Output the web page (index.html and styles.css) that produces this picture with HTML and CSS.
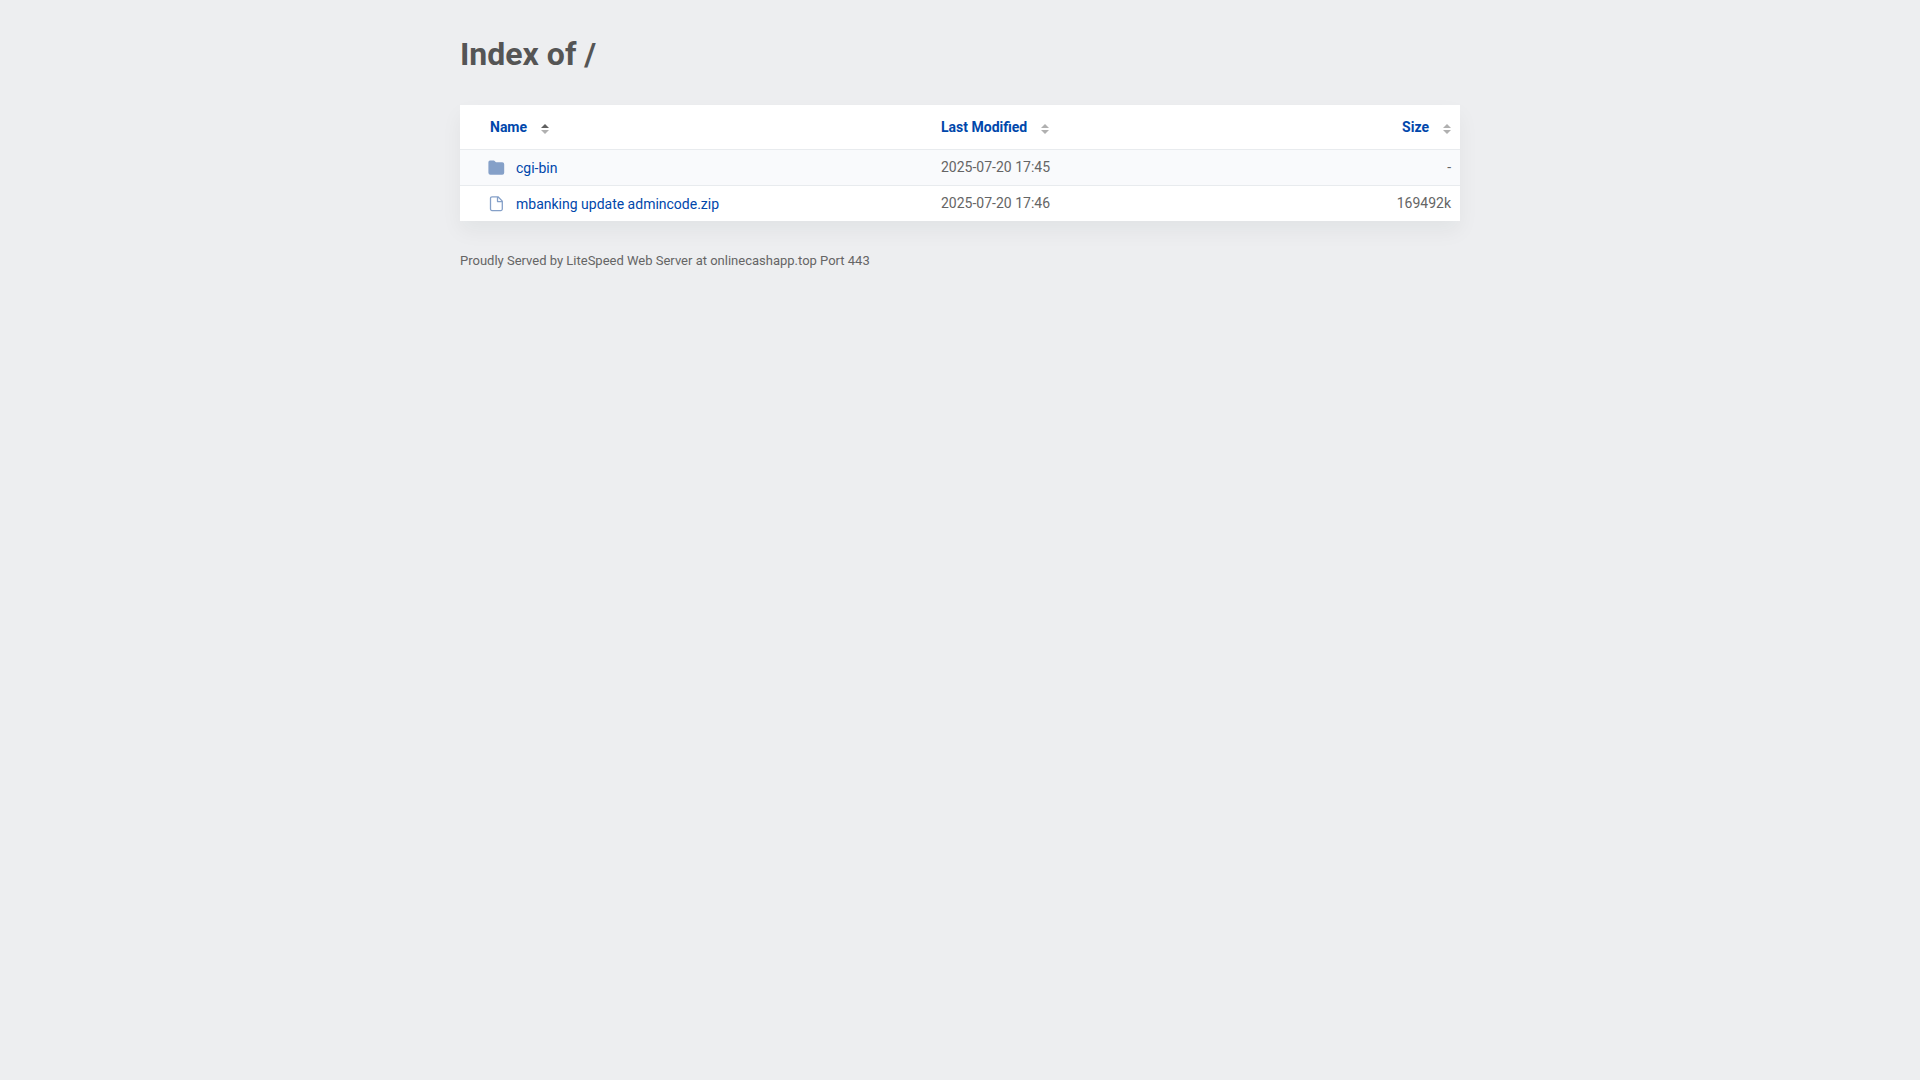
FILE: index.html
```html
<!DOCTYPE html>
<html lang="en">
<head>
    <meta charset="UTF-8">
    <meta name="viewport" content="width=device-width, initial-scale=1.0">
    <title>Index of /</title>
    <link rel="stylesheet" href="styles.css">
</head>
<body>
    <div class="content">
        <h1>Index of /</h1>
        <table class="listing">
            <thead>
                <tr>
                    <th class="name" aria-sort="ascending">
                        <a href="#">Name<svg class="sort asc" viewBox="0 0 8 10"><path class="up" d="M0 4L4 0l4 4z"/><path class="down" d="M0 6h8l-4 4z"/></svg></a>
                    </th>
                    <th class="date">
                        <a href="#">Last Modified<svg class="sort" viewBox="0 0 8 10"><path class="up" d="M0 4L4 0l4 4z"/><path class="down" d="M0 6h8l-4 4z"/></svg></a>
                    </th>
                    <th class="size">
                        <a href="#">Size<svg class="sort" viewBox="0 0 8 10"><path class="up" d="M0 4L4 0l4 4z"/><path class="down" d="M0 6h8l-4 4z"/></svg></a>
                    </th>
                </tr>
            </thead>
            <tbody>
                <tr>
                    <td class="name">
                        <a href="cgi-bin/"><svg class="icon" viewBox="0 0 16 16"><path fill="#85a0c8" d="M2 .6h4l2 1.6h6.200a2 2 0 0 1 2 2v8.600a2 2 0 0 1-2 2H2.400a2 2 0 0 1-2-2V2.200A1.600 1.600 0 0 1 2 .6z"/></svg>cgi-bin</a>
                    </td>
                    <td class="date">2025-07-20 17:45</td>
                    <td class="size">-</td>
                </tr>
                <tr>
                    <td class="name">
                        <a href="mbanking%20update%20admincode.zip"><svg class="icon" viewBox="0 0 16 16"><path fill="none" stroke="#85a0c8" stroke-width="1.3" stroke-linejoin="round" d="M4 .8h6l4.300 4.300v8a1.500 1.500 0 0 1-1.500 1.500H4a1.500 1.500 0 0 1-1.500-1.500V2.300A1.500 1.500 0 0 1 4 .8zM9.500 .8v4.800h4.800"/></svg>mbanking update admincode.zip</a>
                    </td>
                    <td class="date">2025-07-20 17:46</td>
                    <td class="size">169492k</td>
                </tr>
            </tbody>
        </table>
        <address>Proudly Served by LiteSpeed Web Server at onlinecashapp.top Port 443</address>
    </div>
</body>
</html>
```
FILE: styles.css
```css
* {
    box-sizing: border-box;
}

body {
    margin: 0;
    padding: 32px 20px;
    font-family: Roboto, "Liberation Sans", sans-serif;
    font-size: 14px;
    line-height: 20px;
    color: #555;
    background-color: #edeef0;
}

.content {
    max-width: 1000px;
    margin: 0 auto;
}

h1 {
    margin: 0 0 29px;
    font-size: 32px;
    line-height: 44px;
}

a {
    color: #0047ab;
    text-decoration: none;
}

a:hover {
    text-decoration: underline;
}

.listing {
    width: 100%;
    table-layout: fixed;
    border-collapse: separate;
    border-spacing: 0;
    background: white;
    box-shadow: 0 10px 20px rgba(0, 30, 30, 0.05);
}

th {
    padding: 12px 9px;
    text-align: left;
}

td {
    height: 36px;
    padding: 7px 9px 8px;
    border-top: 1px solid #e8ebee;
    color: #656565;
    vertical-align: top;
}

tbody tr:nth-child(odd) {
    background: #f9fafc;
}

th.name {
    width: 472px;
    padding-left: 30px;
}

td.name {
    padding: 8px 9px 7px 28px;
}

.size {
    width: 200px;
    text-align: right;
}

.listing a {
    display: inline-flex;
    align-items: center;
    vertical-align: top;
}

.sort {
    width: 8px;
    height: 10px;
    margin: 3px 0 0 14px;
    fill: #b0b0b0;
}

.asc .up {
    fill: #606060;
}

.icon {
    width: 16px;
    height: 16px;
    margin-right: 12px;
    overflow: visible;
}

address {
    margin-top: 30px;
    font-size: 13px;
    font-style: normal;
    color: #656565;
}
```
